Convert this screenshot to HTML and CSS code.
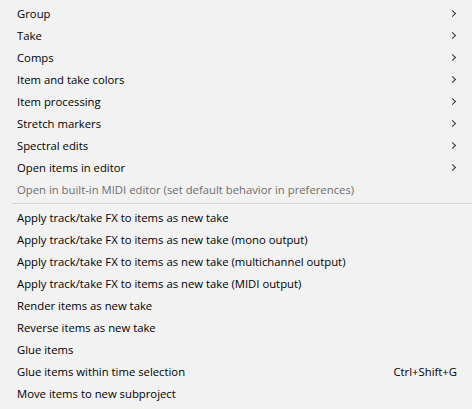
FILE: index.html
```html
<!DOCTYPE html>
<html>
<head>
<meta charset="utf-8">
<link rel="stylesheet" href="styles.css">
</head>
<body>
<div class="menu">
  <div class="item sub"><span class="label">Group</span><span class="arrow"></span></div>
  <div class="item sub"><span class="label">Take</span><span class="arrow"></span></div>
  <div class="item sub"><span class="label">Comps</span><span class="arrow"></span></div>
  <div class="item sub"><span class="label">Item and take colors</span><span class="arrow"></span></div>
  <div class="item sub"><span class="label">Item processing</span><span class="arrow"></span></div>
  <div class="item sub"><span class="label">Stretch markers</span><span class="arrow"></span></div>
  <div class="item sub"><span class="label">Spectral edits</span><span class="arrow"></span></div>
  <div class="item sub"><span class="label">Open items in editor</span><span class="arrow"></span></div>
  <div class="item disabled"><span class="label">Open in built-in MIDI editor (set default behavior in preferences)</span></div>
  <div class="sep"></div>
  <div class="item"><span class="label">Apply track/take FX to items as new take</span></div>
  <div class="item"><span class="label">Apply track/take FX to items as new take (mono output)</span></div>
  <div class="item"><span class="label">Apply track/take FX to items as new take (multichannel output)</span></div>
  <div class="item"><span class="label">Apply track/take FX to items as new take (MIDI output)</span></div>
  <div class="item"><span class="label">Render items as new take</span></div>
  <div class="item"><span class="label">Reverse items as new take</span></div>
  <div class="item"><span class="label">Glue items</span></div>
  <div class="item"><span class="label">Glue items within time selection</span><span class="shortcut">Ctrl+Shift+G</span></div>
  <div class="item"><span class="label">Move items to new subproject</span></div>
</div>
</body>
</html>
```
FILE: styles.css
```css
html, body {
  margin: 0;
  padding: 0;
  background: #f2f2f2;
}
.menu {
  width: 472px;
  height: 409px;
  padding-top: 3px;
  box-sizing: border-box;
  background: #f2f2f2;
  font-family: "Open Sans", "Noto Sans", sans-serif;
  font-size: 11.3px;
  color: #000;
  overflow: hidden;
}
.item {
  height: 22px;
  display: flex;
  align-items: center;
  padding-left: 17px;
  padding-right: 15px;
  white-space: nowrap;
  line-height: 20px;
  padding-bottom: 1px;
  box-sizing: border-box;
}
.label {
  flex: 1;
}
.disabled {
  color: #6d6d6d;
}
.arrow {
  width: 4px;
  height: 4px;
  border-right: 1.3px solid #333;
  border-top: 1.3px solid #333;
  transform: rotate(45deg);
  margin-right: 2px;
}
.sep {
  height: 1px;
  background: #d5d5d5;
  margin: 2px 0 3px 12px;
}
```
